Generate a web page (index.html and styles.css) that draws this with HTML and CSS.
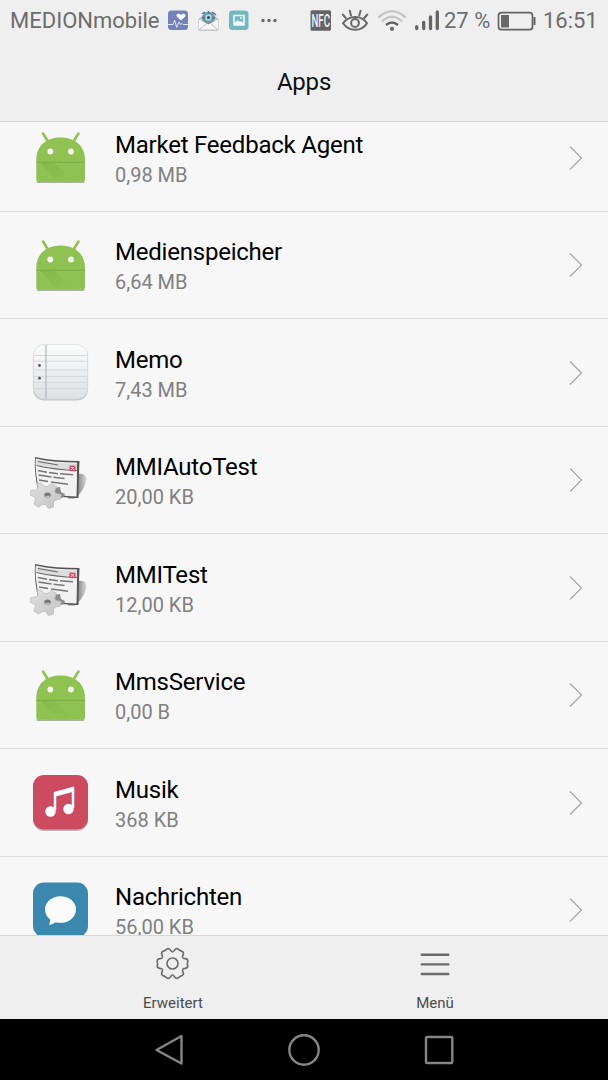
FILE: index.html
```html
<!DOCTYPE html>
<html lang="de">
<head>
  <meta charset="utf-8">
  <title>Apps</title>
  <link rel="stylesheet" href="styles.css">
</head>
<body>
  <!-- Shared icons -->
  <svg class="defs">
    <defs>
      <linearGradient id="memo-bg" x1="0" y1="0" x2="0" y2="1">
        <stop offset="0" stop-color="#fbfcfc"/><stop offset="1" stop-color="#dde1e4"/>
      </linearGradient>
      <linearGradient id="fold" x1="0" y1="0" x2="1" y2="1">
        <stop offset="0" stop-color="#6fa33c"/><stop offset="1" stop-color="#8fc252"/>
      </linearGradient>
      <linearGradient id="side" x1="0" y1="0" x2="1" y2="0">
        <stop offset="0" stop-color="#555"/><stop offset=".6" stop-color="#777"/><stop offset="1" stop-color="#ccc"/>
      </linearGradient>
      <linearGradient id="cog-bg" x1="0" y1="0" x2="1" y2="1">
        <stop offset="0" stop-color="#e2e2e2"/><stop offset="1" stop-color="#c2c2c2"/>
      </linearGradient>
      <symbol id="android" viewBox="0 0 60 60">
        <path d="M13 6.500l5 8M48.500 6.500l-5 8" stroke="#8fc252" stroke-width="2.600" stroke-linecap="round"/>
        <path d="M7.500 55h46" stroke="#aab3a0" stroke-width="1.800" stroke-linecap="round"/>
        <path d="M6.300 33C6.300 18 17 10.500 30.500 10.500S55 18 55 33v19.500a2 2 0 0 1-2 2H8.300a2 2 0 0 1-2-2z" fill="#8fc252"/>
        <path d="M6.300 35.500h4L27 54.500h16L24 35.500z" fill="url(#fold)" opacity=".3"/>
        <path d="M6.300 35.300H55" stroke="#78aa43" stroke-width="1"/>
        <circle cx="20.300" cy="24.500" r="2.900" fill="#f5f8f0"/><circle cx="41" cy="24.500" r="2.900" fill="#f5f8f0"/>
      </symbol>
      <symbol id="test" viewBox="0 0 60 60">
        <path d="M48 24c5-1 8 1 8.500 5-1 8-6 15-12 19.500H38z" fill="url(#side)" opacity=".75"/>
        <path d="M5 7c14 3 30 4 44.500 4-.5 12-1 24-1 37-15-.5-27-2-40-5C6 31 4 19 5 7z" fill="#555"/>
        <path d="M5.700 8.500c13 3 28 4 41.300 4 0 11 0 22-.5 34C34 46 21 44.500 9.500 42 7 31 5 19 5.700 8.500z" fill="#f2f2f2"/>
        <path d="M6 9.500c13 3 27 4 41 4v6.500C34 20 19 18 6.500 15z" fill="#ddd"/>
        <path d="M8 11.500l20 3.500M6.500 15.500c13 3 26 4.500 40.500 5" stroke="#666" stroke-width="1.200" fill="none"/>
        <path d="M39.500 15.500l6 .3v5.500l-6-.3z" fill="#dc4660"/>
        <path d="M41 16.800l3 3m0-3l-3 3" stroke="#fff" stroke-width="1"/>
        <path d="M8 20.500l9 1.800m2 .2l9 1.200m2 .1l13 .9M8.500 25l13 2m2 .2l11 1.300M9 30l9 1.600m3 .3l17 2.300" stroke="#777" stroke-width="1.500"/>
        <path d="M24 38l6-1 1 5 4 2-2 4-5-1-3 3z" fill="#8c8c8c"/>
        <g transform="translate(17.500 45)">
          <path d="M-7-12l4 3.500 3 0 4-3 5 3-2 5 1.500 2 5 1-.5 4.500-5 1-2 2 0 5-5 1.500-3-4-3 0-4 2.500-4.500-3 1.500-5-1-2-4.500-2 1-4.500 5-.5 2-2-1-5z" fill="url(#cog-bg)" stroke="#bbb" stroke-width=".8" stroke-linejoin="round"/>
          <ellipse cx="0" cy="0" rx="3.300" ry="2.600" fill="#777"/>
          <path d="M-2 1q2 1.500 4 0" stroke="#ddd" fill="none"/>
        </g>
      </symbol>
      <symbol id="arrow" viewBox="0 0 14 26">
        <path d="M1 1.500L12.500 13 1 24.500" fill="none" stroke="#a6a6a6" stroke-width="1.200"/>
      </symbol>
    </defs>
  </svg>

  <!-- Status bar -->
  <div class="status-bar">
    <span class="carrier">MEDIONmobile</span>
    <svg width="30" height="28" viewBox="165 6 30 28">
      <rect x="168" y="10.500" width="20" height="19.500" rx="3.500" fill="#7382b8"/>
      <path d="M181 20.500l-3.700-3.500c-2.300-3 1.700-4.700 3.700-2 2-2.700 6-1 3.700 2z" fill="#fff"/>
      <path d="M168 24.500h5l1.700-4.500 2 7.500 2.300-5.500 1.500 2.500 1.500-1 1 1h5" fill="none" stroke="#dfe3f3" stroke-width="1"/>
    </svg>
    <svg width="30" height="28" viewBox="195 6 30 28">
      <path d="M199 19l9.500-7 9.500 7v11h-19z" fill="#c9c9c9" stroke="#999" stroke-width=".6"/>
      <circle cx="208.500" cy="18" r="6.300" fill="#6c98ac"/>
      <path d="M202 14l3-2m7 0l4 3M202 18h13M208.500 11v5" stroke="#4c7487" stroke-width="1.500"/>
      <circle cx="208.500" cy="17.500" r="3.300" fill="#b9d5e0"/><circle cx="208.500" cy="17.500" r="1.600" fill="#315267"/>
      <path d="M199 19.500l9.500 5 9.500-5V29a1 1 0 0 1-1 1h-17a1 1 0 0 1-1-1z" fill="#f5f5f5"/>
      <path d="M199.500 29.500l7-6m11 6l-7-6M199 30h19" stroke="#bbb" stroke-width=".9"/>
    </svg>
    <svg width="30" height="28" viewBox="225 6 30 28">
      <rect x="229" y="10.500" width="19.500" height="19.500" rx="3.500" fill="#72b9bf"/>
      <path d="M234 15.500h10v9.500h-10z" fill="none" stroke="#f4fbfb" stroke-width="1.600"/>
      <path d="M234 24l3.500-4 2.500 2 1.500-1 2.500 3v1h-10z" fill="#f4fbfb"/><circle cx="241" cy="18" r="1" fill="#f4fbfb"/>
    </svg>
    <svg width="27" height="28" viewBox="255 6 27 28">
      <g fill="#686868"><circle cx="263" cy="20.500" r="1.700"/><circle cx="269" cy="20.500" r="1.700"/><circle cx="275" cy="20.500" r="1.700"/></g>
    </svg>
    <svg class="nfc" width="30" height="28" viewBox="308 6 30 28">
      <rect x="310.500" y="10.300" width="20.500" height="20.500" rx="1.500" fill="#646464"/>
      <text x="311.500" y="27" textLength="18.500" lengthAdjust="spacingAndGlyphs" fill="#f2f2f2">NFC</text>
    </svg>
    <svg width="37" height="28" viewBox="338 6 37 28">
      <g fill="none" stroke="#686868" stroke-width="2" stroke-linecap="round">
        <path d="M343 23.300c6-8.500 18.500-8.500 24 0-5.500 8.700-18 8.700-24 0z"/><circle cx="355" cy="23" r="3.900"/>
        <path d="M345.800 18l-3-3.500M351 15.500l-1.300-4.700M359.300 15.500l1.300-4.700M364.300 18l3-3.500"/>
      </g>
    </svg>
    <svg width="36" height="28" viewBox="375 6 36 28">
      <g fill="none" stroke-width="2.600">
        <path d="M378.500 17.500q13.500-12.500 27 0" stroke="#c4c7c4"/><path d="M382 21.500q10-9.500 20 0" stroke="#c4c7c4"/>
        <path d="M386 25q6-5 12 0" stroke="#646464"/>
      </g>
      <circle cx="392" cy="28.800" r="2.100" fill="#646464"/>
    </svg>
    <svg width="33" height="28" viewBox="411 6 33 28">
      <path d="M416.700 28.500v-1.800M423.700 28.500v-6M430.500 28.500V17M437.300 28.500V12" stroke="#656565" stroke-width="3.300" stroke-linecap="round"/>
    </svg>
    <span class="percent">27 %</span>
    <svg width="45" height="28" viewBox="495 6 45 28">
      <rect x="498.500" y="12.700" width="34" height="17" rx="3" fill="none" stroke="#646464" stroke-width="1.700"/>
      <path d="M501 15h8v12.500h-8z" fill="#686868"/><path d="M534.500 17v8" stroke="#646464" stroke-width="2"/>
    </svg>
    <span class="time">16:51</span>
  </div>

  <div class="header">Apps</div>

  <!-- Installed apps -->
  <div class="app-list">
    <div class="app">
      <svg class="app-icon"><use href="#android"/></svg>
      <div class="app-info"><div class="app-name">Market Feedback Agent</div><div class="app-size">0,98 MB</div></div>
      <svg class="arrow"><use href="#arrow"/></svg>
    </div>
    <div class="app">
      <svg class="app-icon"><use href="#android"/></svg>
      <div class="app-info"><div class="app-name">Medienspeicher</div><div class="app-size">6,64 MB</div></div>
      <svg class="arrow"><use href="#arrow"/></svg>
    </div>
    <div class="app">
      <svg class="app-icon" viewBox="0 0 60 60">
        <rect x="3" y="4" width="55" height="54.500" rx="11" fill="#c3c6c8"/>
        <rect x="3.300" y="2.500" width="54.400" height="54.500" rx="11" fill="url(#memo-bg)" stroke="#d4d7d9" stroke-width=".7"/>
        <path d="M4 13.500h53M3.500 19.200h54M3.500 28h54M3.500 34.500h54M3.500 40.500h54M4 46.500h53" stroke="#d5d8dc" stroke-width="1"/>
        <path d="M16 3v54" stroke="#b8bbbd" stroke-width="1.300"/>
        <circle cx="9.500" cy="23.500" r="1.400" fill="#555"/><circle cx="9.500" cy="36.200" r="1.400" fill="#555"/>
      </svg>
      <div class="app-info"><div class="app-name">Memo</div><div class="app-size">7,43 MB</div></div>
      <svg class="arrow"><use href="#arrow"/></svg>
    </div>
    <div class="app">
      <svg class="app-icon"><use href="#test"/></svg>
      <div class="app-info"><div class="app-name">MMIAutoTest</div><div class="app-size">20,00 KB</div></div>
      <svg class="arrow"><use href="#arrow"/></svg>
    </div>
    <div class="app">
      <svg class="app-icon"><use href="#test"/></svg>
      <div class="app-info"><div class="app-name">MMITest</div><div class="app-size">12,00 KB</div></div>
      <svg class="arrow"><use href="#arrow"/></svg>
    </div>
    <div class="app">
      <svg class="app-icon"><use href="#android"/></svg>
      <div class="app-info"><div class="app-name">MmsService</div><div class="app-size">0,00 B</div></div>
      <svg class="arrow"><use href="#arrow"/></svg>
    </div>
    <div class="app">
      <svg class="app-icon" viewBox="0 0 60 60">
        <rect x="3" y="4" width="55" height="55" rx="11" fill="#c5b8bb"/>
        <rect x="3" y="3" width="55" height="54.500" rx="11" fill="#cd4b61"/>
        <path d="M25 38V21.500l18-4.500v19" fill="none" stroke="#fff" stroke-width="2.500"/>
        <path d="M24 20l20-5.500v5L24 25z" fill="#fff"/>
        <circle cx="20.500" cy="39.500" r="5.200" fill="#fff"/><circle cx="38.500" cy="37" r="5.200" fill="#fff"/>
      </svg>
      <div class="app-info"><div class="app-name">Musik</div><div class="app-size">368 KB</div></div>
      <svg class="arrow"><use href="#arrow"/></svg>
    </div>
    <div class="app">
      <svg class="app-icon" viewBox="0 0 60 60">
        <rect x="3" y="2.500" width="55" height="54.500" rx="11" fill="#3b88ae"/>
        <ellipse cx="30.500" cy="29.500" rx="15.500" ry="13.300" fill="#fafafa"/>
        <path d="M20 37.500q1 4-1 7.500 5-1 8-4z" fill="#fafafa"/>
      </svg>
      <div class="app-info"><div class="app-name">Nachrichten</div><div class="app-size">56,00 KB</div></div>
      <svg class="arrow"><use href="#arrow"/></svg>
    </div>
  </div>

  <!-- Bottom toolbar -->
  <div class="toolbar">
    <div class="tool">
      <svg width="40" height="36" viewBox="-19.500 -17.500 40 36">
        <defs><path id="tooth" d="M10.100-5.850C11.300-3.800 15.500-6.300 15.300-2.300Q14.500 0 15.300 2.300C15.500 6.300 11.300 3.800 10.100 5.850"/></defs>
        <g fill="none" stroke="#6b6b6b" stroke-width="1.600">
          <use href="#tooth"/><use href="#tooth" transform="rotate(60)"/><use href="#tooth" transform="rotate(120)"/>
          <use href="#tooth" transform="rotate(180)"/><use href="#tooth" transform="rotate(240)"/><use href="#tooth" transform="rotate(300)"/>
          <circle r="5.500"/>
        </g>
      </svg>
      <span>Erweitert</span>
    </div>
    <div class="tool">
      <svg width="40" height="36" viewBox="-20 -18 40 36">
        <path d="M-13.200-9.200h26.500M-13.200.4h26.500M-13.200 10h26.500" stroke="#6b6b6b" stroke-width="2.400" stroke-linecap="round"/>
      </svg>
      <span>Menü</span>
    </div>
  </div>

  <!-- Android navigation keys -->
  <div class="nav-bar">
    <svg width="40" height="40" viewBox="-20 -20 40 40"><path d="M12.500-14v27.500L-12.500 0z"/></svg>
    <svg width="40" height="40" viewBox="-20 -20 40 40"><circle r="14.700"/></svg>
    <svg width="40" height="40" viewBox="-20 -20 40 40"><rect x="-13" y="-13" width="26.300" height="26" rx="1"/></svg>
  </div>
</body>
</html>
```

FILE: styles.css
```css
body {
  margin: 0;
  display: flex;
  flex-direction: column;
  height: 1080px;
  overflow: hidden;
  font-family: Roboto, sans-serif;
  background: #f7f7f7;
}
svg {
  display: block;
  flex: none;
}
.defs {
  width: 0;
  height: 0;
}
.status-bar {
  display: flex;
  align-items: center;
  height: 40px;
  flex: none;
  padding-left: 10px;
  background: #efefef;
  color: #6c6c6c;
  font-size: 22px;
  white-space: nowrap;
}
.status-bar span {
  flex: none;
  line-height: 40px;
  padding-top: 1px;
}
.carrier {
  width: 155px;
}
.nfc {
  margin-left: 26px;
}
.nfc text {
  font-size: 18px;
  font-weight: 500;
}
.percent {
  width: 51px;
}
.time {
  margin-left: 3px;
}
.header {
  height: 81px;
  flex: none;
  background: #efefef;
  border-bottom: 1px solid #d6d6d6;
  color: #111;
  font-size: 24px;
  letter-spacing: -0.2px;
  line-height: 84px;
  text-align: center;
}
.app-list {
  height: 813px;
  flex: none;
  overflow: hidden;
}
.app {
  display: flex;
  align-items: center;
  box-sizing: border-box;
  height: 107.5px;
  padding: 0 25px 0 30px;
  border-bottom: 1px solid #dedede;
}
.app:first-child {
  margin-top: -18px;
}
.app-icon {
  width: 60px;
  height: 60px;
}
.app-info {
  flex: 1;
  padding: 6px 0 0 25px;
}
.app-name {
  color: #000;
  font-size: 24px;
  letter-spacing: -0.22px;
  line-height: 29px;
}
.app-size {
  color: #808080;
  font-size: 20px;
  line-height: 30px;
}
.arrow {
  width: 14px;
  height: 26px;
  padding-top: 1px;
}
.toolbar {
  display: flex;
  justify-content: center;
  box-sizing: border-box;
  height: 84px;
  flex: none;
  border-top: 1px solid #d6d6d6;
  background: #efefef;
}
.tool {
  display: flex;
  flex-direction: column;
  align-items: center;
  width: 262px;
  padding-top: 10px;
  color: #4c4c4c;
  font-size: 15px;
}
.tool span {
  padding-top: 11px;
  line-height: 20px;
}
.nav-bar {
  display: flex;
  justify-content: center;
  align-items: center;
  gap: 95px;
  flex: 1;
  background: #000;
}
.nav-bar path, .nav-bar circle, .nav-bar rect {
  fill: none;
  stroke: #858585;
  stroke-width: 2.4;
  stroke-linejoin: round;
}
```
